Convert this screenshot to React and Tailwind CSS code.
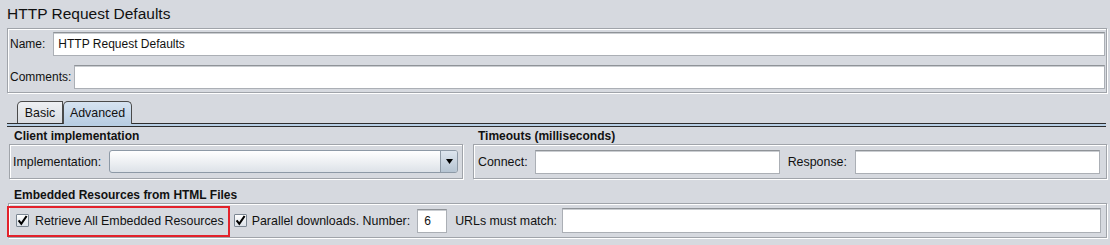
import React from "react";

function Panel({ className = "", children }) {
  return (
    <div
      className={`border border-[#a0a4aa] shadow-[inset_1px_1px_0_#ffffff,1px_1px_0_#ffffff] ${className}`}
    >
      {children}
    </div>
  );
}

function TextField({ value = "", className = "" }) {
  return (
    <div
      className={`h-[24px] bg-white border border-[#abafb5] border-t-[#8f9398] shadow-[inset_0_1px_0_#cacdd1] flex items-center px-[6px] text-[12px] text-[#111] ${className}`}
    >
      {value}
    </div>
  );
}

function CheckBox() {
  return (
    <div className="w-[13px] h-[13px] shrink-0 border border-[#7b8692] rounded-[1px] bg-gradient-to-b from-white to-[#dbe1e8] flex items-center justify-center">
      <svg width="11" height="11" viewBox="0 0 11 11">
        <path d="M1.6 5.4 L4.3 8.8 L9.6 1" fill="none" stroke="#000" strokeWidth="2.1" strokeLinejoin="miter" />
      </svg>
    </div>
  );
}

function Dropdown() {
  return (
    <div className="flex-1 h-[23px] flex rounded-[3px] border border-[#8d99a6] bg-gradient-to-b from-white to-[#dde2e8] overflow-hidden">
      <div className="flex-1" />
      <div className="w-[17px] border-l border-[#8d99a6] bg-gradient-to-b from-[#dde5ee] to-[#b6c4d2] flex items-center justify-center">
        <svg width="7" height="5" viewBox="0 0 7 5">
          <path d="M0 0 H7 L3.5 5 Z" fill="#000" />
        </svg>
      </div>
    </div>
  );
}

export default function App() {
  return (
    <div className="w-[1110px] h-[245px] overflow-hidden bg-[#d6d9df] text-[12.4px] leading-[14px] text-[#111] font-['Liberation_Sans',Arial,sans-serif]">
      {/* header */}
      <div className="h-[28px] pl-[7px] pt-[4px] text-[15.5px] leading-[20px]">
        HTTP Request Defaults
      </div>

      {/* name / comments */}
      <Panel className="ml-[7px] w-[1100px] h-[65px] pl-[2px] pr-[1px] pt-[3px] flex flex-col gap-[9px]">
        <div className="flex items-center">
          <span className="text-[12px]">Name:</span>
          <TextField className="flex-1 ml-[8px] pl-[4px]" value="HTTP Request Defaults" />
        </div>
        <div className="flex items-center">
          <span className="text-[12px]">Comments:</span>
          <TextField className="flex-1 ml-[3px]" />
        </div>
      </Panel>

      {/* tabs */}
      <div className="mt-[8px] ml-[7px] mr-[4px]">
        <div className="h-[23px] flex items-end border-b border-[#2e2e2e]">
          <div className="w-[10px]" />
          <div className="h-[22px] w-[46px] border border-b-0 border-[#4a4a4a] rounded-tl-[5px] bg-gradient-to-b from-[#eef0f3] to-[#d9dce1] flex items-center justify-center">
            Basic
          </div>
          <div className="h-[23px] -mb-px w-[69px] border border-b-0 border-[#4a4a4a] rounded-t-[5px] bg-gradient-to-b from-[#d6e3f1] to-[#b8cde2] flex items-center justify-center pb-[1px]">
            Advanced
          </div>
        </div>
        <div className="h-[2px] bg-[#b8cfe5]" />
        <div className="h-[1px] bg-[#2e2e2e]" />
      </div>

      {/* client + timeouts */}
      <div className="ml-[9px] mr-[3px] flex gap-[10px]">
        <div className="w-[454px] flex flex-col">
          <div className="h-[17px] pt-[2px] pl-[5px] font-bold text-[12px]">Client implementation</div>
          <Panel className="h-[35px] pl-[3px] pr-[4px] flex items-center">
            <span>Implementation:</span>
            <div className="w-[8px]" />
            <Dropdown />
          </Panel>
        </div>
        <div className="flex-1 flex flex-col">
          <div className="h-[17px] pt-[2px] pl-[5px] font-bold text-[12px]">Timeouts (milliseconds)</div>
          <Panel className="h-[35px] pl-[4px] pr-[6px] flex items-center">
            <span>Connect:</span>
            <TextField className="flex-1 ml-[7px]" />
            <span className="ml-[8px]">Response:</span>
            <TextField className="flex-1 ml-[8px]" />
          </Panel>
        </div>
      </div>

      {/* embedded resources */}
      <div className="h-[24px] pt-[9px] pl-[14px] font-bold text-[12px]">Embedded Resources from HTML Files</div>
      <Panel className="relative ml-[8px] w-[1099px] h-[35px] pl-[7px] pr-[5px] flex items-center">
        <CheckBox />
        <span className="ml-[6px]">Retrieve All Embedded Resources</span>
        <div className="ml-[10px]">
          <CheckBox />
        </div>
        <span className="ml-[5px]">Parallel downloads. Number:</span>
        <TextField className="w-[30px] ml-[7px]" value="6" />
        <span className="ml-[8px]">URLs must match:</span>
        <TextField className="flex-1 ml-[5px] h-[25px]" />
        <div className="absolute left-[-2px] top-[2px] w-[223px] h-[31px] border-2 border-[#e3222b]" />
      </Panel>
    </div>
  );
}
